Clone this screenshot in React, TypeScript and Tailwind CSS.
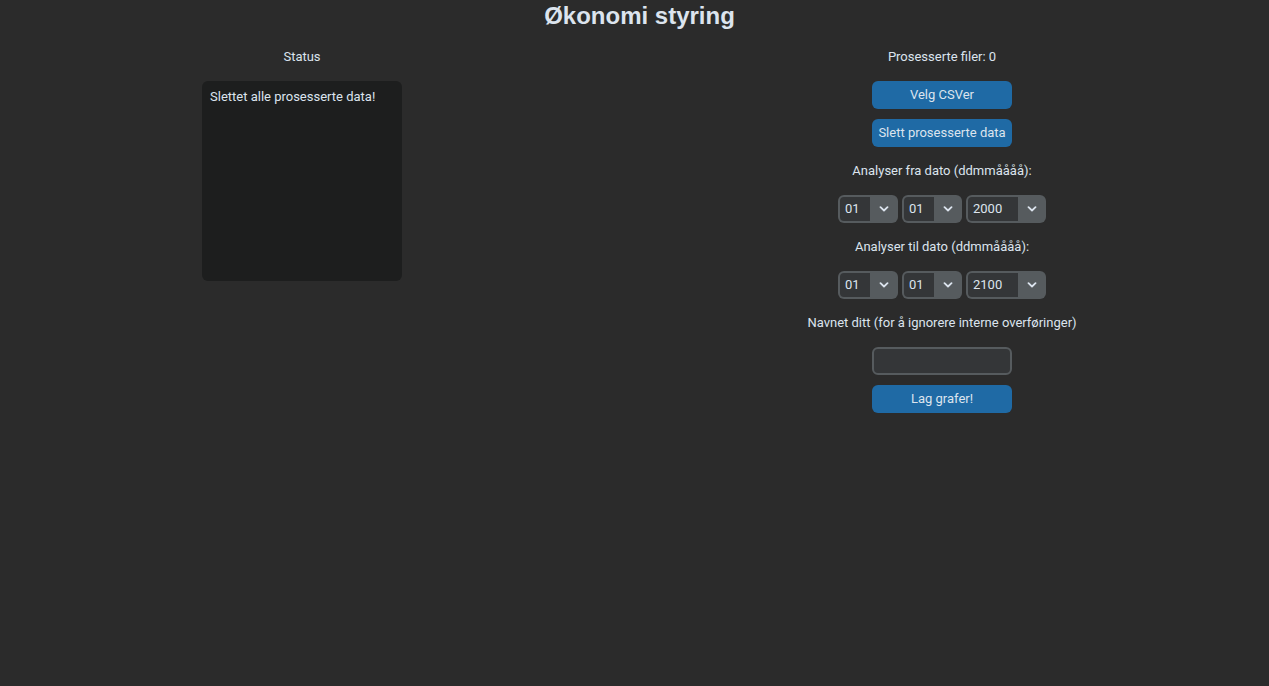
import React from "react";

const body = { fontFamily: "Roboto, 'Noto Sans', sans-serif" };

function Chevron() {
  return (
    <svg width="10" height="6" viewBox="0 0 10 6" className="block">
      <polyline points="1.5,1.2 5,4.5 8.5,1.2" fill="none" stroke="#dce4ee" strokeWidth="1.8" strokeLinecap="round" strokeLinejoin="round" />
    </svg>
  );
}

function Combo({ value, wide }: { value: string; wide?: boolean }) {
  return (
    <div
      className={`${wide ? "w-[80px]" : "w-[60px]"} h-[28px] rounded-[6px] bg-[#565b5e] py-[2px] pl-[2px] flex`}
    >
      <div className="flex-1 bg-[#343638] rounded-l-[4px] flex items-center pl-[5px] text-[13px] text-[#dce4ee]">
        {value}
      </div>
      <div className="w-[28px] flex items-center justify-center">
        <Chevron />
      </div>
    </div>
  );
}

function Btn({ children }: { children: React.ReactNode }) {
  return (
    <div className="w-[140px] h-[28px] rounded-[6px] bg-[#1f6aa5] flex items-center justify-center text-[13px] text-[#dce4ee]">
      {children}
    </div>
  );
}

function Label({ children }: { children: React.ReactNode }) {
  return <div className="h-[28px] flex items-center justify-center text-[13px] text-[#dce4ee]">{children}</div>;
}

export default function App() {
  return (
    <div className="w-[1269px] h-[686px] bg-[#2b2b2b] overflow-hidden" style={body}>
      <div
        className="h-[30px] pt-[1px] pl-[10px] text-center text-[24px] leading-[30px] font-bold text-[#dce4ee]"
        style={{ fontFamily: "'Liberation Sans', Arial, sans-serif" }}
      >
        Økonomi styring
      </div>
      <div className="flex mt-[13px]">
        <div className="ml-[202px] w-[200px] flex flex-col">
          <Label>Status</Label>
          <div className="mt-[10px] h-[200px] rounded-[6px] bg-[#1d1e1e] pt-[8px] px-[8px] text-[13px] leading-[16px] text-[#dce4ee]">
            Slettet alle prosesserte data!
          </div>
        </div>
        <div className="ml-[390px] w-[300px] flex flex-col items-center">
          <Label>Prosesserte filer: 0</Label>
          <div className="mt-[10px]">
            <Btn>Velg CSVer</Btn>
          </div>
          <div className="mt-[10px]">
            <Btn>Slett prosesserte data</Btn>
          </div>
          <div className="mt-[10px]">
            <Label>Analyser fra dato (ddmmåååå):</Label>
          </div>
          <div className="mt-[10px] flex gap-[4px]">
            <Combo value="01" />
            <Combo value="01" />
            <Combo value="2000" wide />
          </div>
          <div className="mt-[10px]">
            <Label>Analyser til dato (ddmmåååå):</Label>
          </div>
          <div className="mt-[10px] flex gap-[4px]">
            <Combo value="01" />
            <Combo value="01" />
            <Combo value="2100" wide />
          </div>
          <div className="mt-[10px]">
            <Label>Navnet ditt (for å ignorere interne overføringer)</Label>
          </div>
          <div className="mt-[10px] w-[140px] h-[28px] rounded-[6px] border-2 border-[#565b5e] bg-[#343638]" />
          <div className="mt-[10px]">
            <Btn>Lag grafer!</Btn>
          </div>
        </div>
      </div>
    </div>
  );
}
